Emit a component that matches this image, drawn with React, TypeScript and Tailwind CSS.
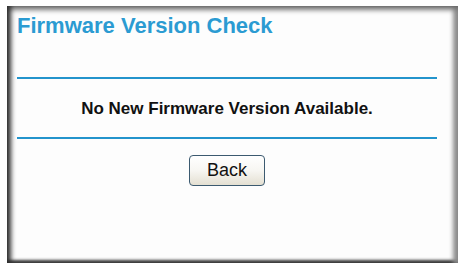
import React from "react";

const App = () => {
  return (
    <div className="w-[459px] h-[267px] bg-white pt-[6px] pl-[7px]">
      <div
        className="w-[451px] h-[257px] bg-[#fdfdfd] flex flex-col pl-[10px] pr-[21px] shadow-[inset_6px_0_5px_-2px_#2e2e2e,inset_0_6px_5px_-2px_#7a7a7a,inset_-8px_0_4px_-3px_#8f8f8f,inset_0_-5px_3px_-2px_#3a3a3a]"
        style={{ fontFamily: '"Liberation Sans", Arial, sans-serif' }}
      >
        <h1 className="text-[22px] leading-none font-bold text-[#2b9bd2] mt-[9px]">
          Firmware Version Check
        </h1>
        <div className="h-[2px] bg-[#2394cc] mt-[40px]" />
        <p className="text-center text-[17px] leading-none font-bold text-[#111] mt-[21px]">
          No New Firmware Version Available.
        </p>
        <div className="h-[2px] bg-[#2394cc] mt-[20px]" />
        <div className="flex justify-center mt-[16px]">
          <button className="w-[76px] h-[31px] rounded-[4px] border border-[#3c5a70] bg-gradient-to-b from-white via-[#f7f6f2] to-[#e4e0d2] text-[18px] leading-none text-[#111] pb-[2px]">
            Back
          </button>
        </div>
      </div>
    </div>
  );
};

export default App;
